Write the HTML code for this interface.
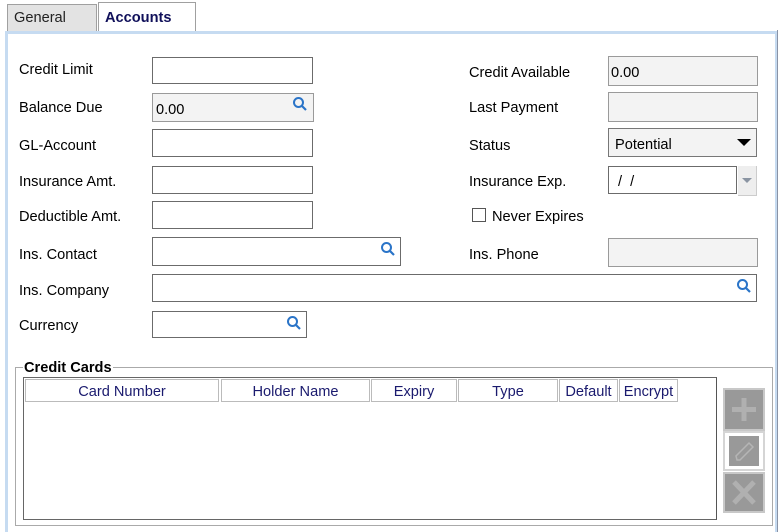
<!DOCTYPE html>
<html style="overflow:hidden;height:532px"><head><meta charset="utf-8"><style>
body{margin:0;width:783px;height:532px;background:#fff;position:relative;overflow:hidden;font-family:"Liberation Sans",Arial,sans-serif;font-size:14.6px;color:#000}
.a{position:absolute}
.lbl{position:absolute;line-height:16px;margin-top:1px}
.in{position:absolute;border:1px solid #6b6b6b;background:#fff;box-sizing:border-box}
.dis{border-color:#9a9a9a;background:#f3f3f3}
.val{position:absolute;left:3px;top:6px;line-height:16px;margin-top:1px}
.mag{position:absolute;width:16px;height:16px}
.hd{position:absolute;top:379px;height:23px;border:1px solid #bbb;box-sizing:border-box;color:#1a1a6e;text-align:center;line-height:24px;font-size:14.6px}
.btn{position:absolute;left:723px;width:42px;background:#999;border:2px solid #c8c8c8;box-sizing:border-box}
</style></head><body>
<div class="a" style="left:7px;top:4px;width:90px;height:27px;background:#e3e3e3;border:1px solid #a0a0a0;border-bottom:none;box-sizing:border-box"></div>
<div class="lbl" style="left:14px;top:9px;color:#222">General</div>
<div class="a" style="left:98px;top:2px;width:98px;height:31px;background:#fff;border:1px solid #a0a0a0;border-bottom:none;box-sizing:border-box"></div>
<div class="lbl" style="left:105px;top:9px;font-weight:bold;color:#10105a">Accounts</div>
<div class="a" style="left:5px;top:31px;width:773px;height:501px;border-top:3px solid #c6dbf1;border-left:3px solid #c6dbf1;border-right:3px solid #c6dbf1;box-sizing:border-box"></div>
<div class="a" style="left:777px;top:30px;width:1px;height:502px;background:#8a93a6"></div>
<div class="lbl" style="left:19px;top:61px">Credit Limit</div>
<div class="lbl" style="left:19px;top:99px">Balance Due</div>
<div class="lbl" style="left:19px;top:137px">GL-Account</div>
<div class="lbl" style="left:19px;top:173px">Insurance Amt.</div>
<div class="lbl" style="left:19px;top:208px">Deductible Amt.</div>
<div class="lbl" style="left:19px;top:246px">Ins. Contact</div>
<div class="lbl" style="left:19px;top:282px">Ins. Company</div>
<div class="lbl" style="left:19px;top:317px">Currency</div>
<div class="in" style="left:152px;top:57px;width:161px;height:27px"></div>
<div class="in dis" style="left:152px;top:93px;width:162px;height:29px"><div class="val" style="top:7px">0.00</div>
<svg class="mag" style="left:139px;top:2px" viewBox="0 0 16 16"><circle cx="6.5" cy="6.5" r="4.5" fill="none" stroke="#2a74c8" stroke-width="2"/><path d="M10 10l4 4" stroke="#2a74c8" stroke-width="2.2"/></svg></div>
<div class="in" style="left:152px;top:129px;width:161px;height:28px"></div>
<div class="in" style="left:152px;top:166px;width:161px;height:28px"></div>
<div class="in" style="left:152px;top:201px;width:161px;height:28px"></div>
<div class="in" style="left:152px;top:237px;width:249px;height:29px">
<svg class="mag" style="left:227px;top:3px" viewBox="0 0 16 16"><circle cx="6.5" cy="6.5" r="4.5" fill="none" stroke="#2a74c8" stroke-width="2"/><path d="M10 10l4 4" stroke="#2a74c8" stroke-width="2.2"/></svg></div>
<div class="in" style="left:152px;top:274px;width:605px;height:28px">
<svg class="mag" style="left:583px;top:3px" viewBox="0 0 16 16"><circle cx="6.5" cy="6.5" r="4.5" fill="none" stroke="#2a74c8" stroke-width="2"/><path d="M10 10l4 4" stroke="#2a74c8" stroke-width="2.2"/></svg></div>
<div class="in" style="left:152px;top:311px;width:155px;height:27px">
<svg class="mag" style="left:133px;top:3px" viewBox="0 0 16 16"><circle cx="6.5" cy="6.5" r="4.5" fill="none" stroke="#2a74c8" stroke-width="2"/><path d="M10 10l4 4" stroke="#2a74c8" stroke-width="2.2"/></svg></div>
<div class="lbl" style="left:469px;top:64px">Credit Available</div>
<div class="lbl" style="left:469px;top:99px">Last Payment</div>
<div class="lbl" style="left:469px;top:137px">Status</div>
<div class="lbl" style="left:469px;top:173px">Insurance Exp.</div>
<div class="a" style="left:472px;top:208px;width:14px;height:14px;border:1px solid #555;box-sizing:border-box;background:#fff"></div>
<div class="lbl" style="left:492px;top:208px">Never Expires</div>
<div class="lbl" style="left:469px;top:246px">Ins. Phone</div>
<div class="in dis" style="left:608px;top:56px;width:150px;height:30px"><div class="val" style="left:2px;top:7px">0.00</div></div>
<div class="in dis" style="left:608px;top:92px;width:150px;height:30px"></div>
<div class="in" style="left:608px;top:128px;width:149px;height:29px;background:#f3f3f3;border-color:#777"><div class="val" style="left:6px;top:7px">Potential</div>
<svg class="a" style="left:128px;top:10px" width="14" height="8"><path d="M0 0h14L7 7z" fill="#000"/></svg></div>
<div class="in" style="left:608px;top:166px;width:129px;height:28px"><div class="val" style="left:9px;top:6px">/&nbsp;&nbsp;/</div></div>
<div class="a" style="left:738px;top:166px;width:19px;height:30px;background:#eee;border-right:1px solid #ccc;border-bottom:1px solid #ccc;box-sizing:border-box"></div>
<svg class="a" style="left:742px;top:178px" width="10" height="6"><path d="M0 0h10L5 5z" fill="#8a94a2"/></svg>
<div class="in dis" style="left:608px;top:238px;width:150px;height:29px"></div>
<div class="a" style="left:15px;top:367px;width:758px;height:159px;border:1px solid #aaa;box-sizing:border-box"></div>
<div class="lbl" style="left:23px;top:359px;font-weight:bold;background:#fff;padding:0 1px">Credit Cards</div>
<div class="a" style="left:23px;top:377px;width:694px;height:143px;border:1px solid #666;border-right-color:#555;box-sizing:border-box;background:#fff"></div>
<div class="hd" style="left:25px;width:194px">Card Number</div>
<div class="hd" style="left:221px;width:149px">Holder Name</div>
<div class="hd" style="left:371px;width:86px">Expiry</div>
<div class="hd" style="left:458px;width:100px">Type</div>
<div class="hd" style="left:559px;width:59px">Default</div>
<div class="hd" style="left:619px;width:59px">Encrypt</div>
<div class="btn" style="top:388px;height:43px"><svg width="38" height="39"><path d="M19 8v23M7 19.5h24" stroke="#b0b0b0" stroke-width="5"/></svg></div>
<div class="a" style="left:723px;top:431px;width:42px;height:40px;border:2px solid #d5d5d5;box-sizing:border-box;background:#fff"><div style="position:absolute;left:4px;top:3px;width:30px;height:30px;background:#999"><svg width="30" height="30"><path d="M8 24l-1-4L20 7l4 4L11 24z" fill="none" stroke="#b5b5b5" stroke-width="1.5"/></svg></div></div>
<div class="btn" style="top:472px;height:41px"><svg width="38" height="37"><path d="M9 8l20 21M29 8L9 29" stroke="#b0b0b0" stroke-width="5"/></svg></div>
</body></html>
